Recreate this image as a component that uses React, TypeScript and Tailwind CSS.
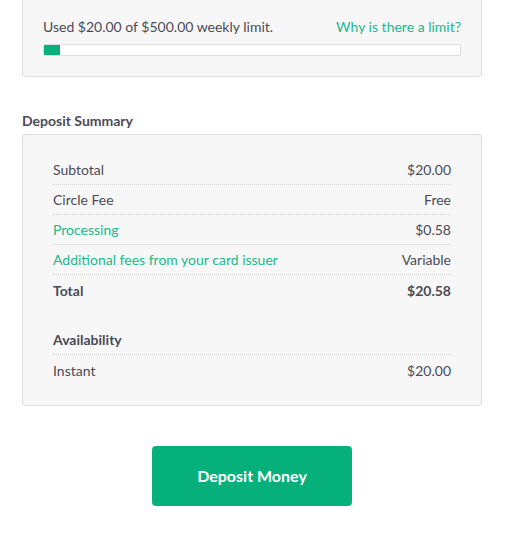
import React from "react";

const rows = [
  { label: "Subtotal", value: "$20.00" },
  { label: "Circle Fee", value: "Free" },
  { label: "Processing", value: "$0.58", link: true },
  { label: "Additional fees from your card issuer", value: "Variable", link: true },
];

const Row = ({
  label,
  value,
  link,
  bold,
  divider = true,
}: {
  label: string;
  value: string;
  link?: boolean;
  bold?: boolean;
  divider?: boolean;
}) => (
  <div
    className={`flex justify-between items-center h-[30px] ${
      divider ? "border-b border-dotted border-[#d4d4d4]" : ""
    } ${bold ? "font-bold" : ""}`}
  >
    <span className={link ? "text-[#1bb98b]" : ""}>{label}</span>
    <span>{value}</span>
  </div>
);

export default function App() {
  return (
    <div className="bg-white min-h-[537px] font-['Lato',sans-serif] text-[14px] text-[#4b4b57]">
      <div className="ml-[22px] w-[460px] pb-10">
        <div className="bg-[#f7f7f7] border-x border-b border-[#dddddd] rounded-b px-5 pt-[17px] pb-5">
          <div className="flex justify-between items-center h-[18px]">
            <span>Used $20.00 of $500.00 weekly limit.</span>
            <a className="text-[#1bb98b]">Why is there a limit?</a>
          </div>
          <div className="mt-[9px] h-[12px] bg-white border border-[#dddddd] rounded-[2px] overflow-hidden">
            <div className="h-full w-[16px] bg-[#06b07b]" />
          </div>
        </div>

        <h3 className="mt-[36px] font-bold leading-[16px]">Deposit Summary</h3>
        <div className="mt-[5px] bg-[#f7f7f7] border border-[#dddddd] rounded px-[30px] pt-5 pb-5">
          {rows.map((r) => (
            <Row key={r.label} {...r} />
          ))}
          <Row label="Total" value="$20.58" bold divider={false} />
          <div className="mt-5">
            <Row label="Availability" value="" bold />
            <Row label="Instant" value="$20.00" divider={false} />
          </div>
        </div>

        <div className="flex justify-center mt-10">
          <button className="w-[200px] h-[60px] bg-[#06b07b] text-white font-bold text-[16px] rounded">
            Deposit Money
          </button>
        </div>
      </div>
    </div>
  );
}
